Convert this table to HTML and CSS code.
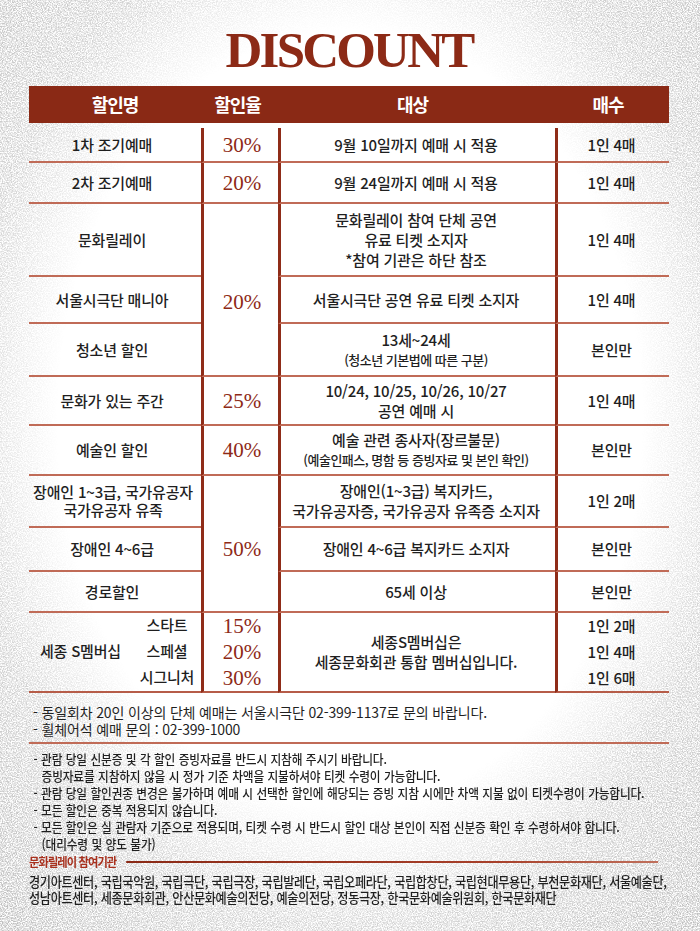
FILE: index.html
```html
<!DOCTYPE html>
<html lang="ko">
<head>
<meta charset="utf-8">
<title>DISCOUNT</title>
<link rel="stylesheet" href="styles.css">
</head>
<body>
<svg class="paper" width="700" height="931" viewBox="0 0 700 931" aria-hidden="true">
  <defs>
    <filter id="grain" x="0" y="0" width="100%" height="100%">
      <feTurbulence type="fractalNoise" baseFrequency="0.8" numOctaves="3" seed="7"/>
      <feColorMatrix type="matrix" values="0 0 0 0 0.52  0 0 0 0 0.52  0 0 0 0 0.52  2.8 0 0 0 -0.95"/>
    </filter>
    <radialGradient id="edge" cx="0.5" cy="0.45" r="0.72">
      <stop offset="0.58" stop-color="#fff" stop-opacity="0"/>
      <stop offset="0.76" stop-color="#fff" stop-opacity="0.7"/>
      <stop offset="1" stop-color="#fff" stop-opacity="1"/>
    </radialGradient>
    <mask id="edgeMask">
      <rect width="700" height="931" fill="url(#edge)"/>
    </mask>
  </defs>
  <rect width="700" height="931" fill="#ffffff"/>
  <rect width="700" height="931" filter="url(#grain)" mask="url(#edgeMask)"/>
</svg>

<main class="page">
  <h1 class="title">DISCOUNT</h1>

  <div class="thead">
    <div>할인명</div>
    <div>할인율</div>
    <div>대상</div>
    <div>매수</div>
  </div>

  <div class="tbody">
    <div class="c name">1차 조기예매</div>
    <div class="c pct">30%</div>
    <div class="c target">9월 10일까지 예매 시 적용</div>
    <div class="c qty">1인 4매</div>

    <div class="c name">2차 조기예매</div>
    <div class="c pct">20%</div>
    <div class="c target">9월 24일까지 예매 시 적용</div>
    <div class="c qty">1인 4매</div>

    <div class="c name">문화릴레이</div>
    <div class="c pct span3 shift-a">20%</div>
    <div class="c target">문화릴레이 참여 단체 공연<br>유료 티켓 소지자<br>*참여 기관은 하단 참조</div>
    <div class="c qty">1인 4매</div>

    <div class="c name">서울시극단 매니아</div>
    <div class="c target">서울시극단 공연 유료 티켓 소지자</div>
    <div class="c qty">1인 4매</div>

    <div class="c name">청소년 할인</div>
    <div class="c target"><span>13세~24세</span><span class="small">(청소년 기본법에 따른 구분)</span></div>
    <div class="c qty">본인만</div>

    <div class="c name">문화가 있는 주간</div>
    <div class="c pct">25%</div>
    <div class="c target">10/24, 10/25, 10/26, 10/27<br>공연 예매 시</div>
    <div class="c qty">1인 4매</div>

    <div class="c name">예술인 할인</div>
    <div class="c pct">40%</div>
    <div class="c target"><span>예술 관련 종사자(장르불문)</span><span class="small">(예술인패스, 명함 등 증빙자료 및 본인 확인)</span></div>
    <div class="c qty">본인만</div>

    <div class="c name tight"><span>장애인 1~3급, 국가유공자</span><span>국가유공자 유족</span></div>
    <div class="c pct span3 shift-b">50%</div>
    <div class="c target">장애인(1~3급) 복지카드,<br>국가유공자증, 국가유공자 유족증 소지자</div>
    <div class="c qty">1인 2매</div>

    <div class="c name">장애인 4~6급</div>
    <div class="c target">장애인 4~6급 복지카드 소지자</div>
    <div class="c qty">본인만</div>

    <div class="c name">경로할인</div>
    <div class="c target">65세 이상</div>
    <div class="c qty">본인만</div>

    <div class="c name member last">
      <span class="member-title">세종 S멤버십</span>
      <span class="tiers"><span>스타트</span><span>스페셜</span><span>시그니처</span></span>
    </div>
    <div class="c pct stack last"><span>15%</span><span>20%</span><span>30%</span></div>
    <div class="c target last">세종S멤버십은<br>세종문화회관 통합 멤버십입니다.</div>
    <div class="c qty stack last"><span>1인 2매</span><span>1인 4매</span><span>1인 6매</span></div>
  </div>

  <div class="contact">
    <p>- 동일회차 20인 이상의 단체 예매는 서울시극단 02-399-1137로 문의 바랍니다.</p>
    <p>- 휠체어석 예매 문의 : 02-399-1000</p>
  </div>

  <div class="fine">
    <div class="rules">
      <p>- 관람 당일 신분증 및 각 할인 증빙자료를 반드시 지참해 주시기 바랍니다.</p>
      <p class="cont">증빙자료를 지참하지 않을 시 정가 기준 차액을 지불하셔야 티켓 수령이 가능합니다.</p>
      <p>- 관람 당일 할인권종 변경은 불가하며 예매 시 선택한 할인에 해당되는 증빙 지참 시에만 차액 지불 없이 티켓수령이 가능합니다.</p>
      <p>- 모든 할인은 중복 적용되지 않습니다.</p>
      <p>- 모든 할인은 실 관람자 기준으로 적용되며, 티켓 수령 시 반드시 할인 대상 본인이 직접 신분증 확인 후 수령하셔야 합니다.</p>
      <p class="cont">(대리수령 및 양도 불가)</p>
    </div>
    <div class="relay-head">
      <span class="relay-label">문화릴레이 참여기관</span>
      <span class="relay-line"></span>
    </div>
    <div class="relay-list">
      <p>경기아트센터, 국립국악원, 국립극단, 국립극장, 국립발레단, 국립오페라단, 국립합창단, 국립현대무용단, 부천문화재단, 서울예술단,</p>
      <p>성남아트센터, 세종문화회관, 안산문화예술의전당, 예술의전당, 정동극장, 한국문화예술위원회, 한국문화재단</p>
    </div>
  </div>
</main>
</body>
</html>
```

FILE: styles.css
```css
* {
  box-sizing: border-box;
}

html, body {
  margin: 0;
  padding: 0;
}

body {
  position: relative;
  width: 700px;
  min-height: 931px;
  background: #ffffff;
  color: #1f1f1f;
  font-family: "Noto Sans CJK KR", "Noto Sans", sans-serif;
  overflow: hidden;
}

.paper {
  position: absolute;
  top: 0;
  left: 0;
  z-index: 0;
  display: block;
}

.page {
  position: relative;
  z-index: 1;
  padding: 0 31px 0 29px;
}

.title {
  margin: 24px 0 10px;
  height: 52px;
  font-family: "Liberation Serif", "Times New Roman", serif;
  font-weight: 700;
  font-size: 51px;
  line-height: 52px;
  letter-spacing: -2.8px;
  text-align: center;
  color: #8c2a16;
}

.thead {
  display: grid;
  grid-template-columns: 172px 77px 277px 114px;
  height: 37px;
  background: #8a2915;
  color: #ffffff;
  font-weight: 700;
  font-size: 18px;
  letter-spacing: -1px;
}

.thead div {
  display: flex;
  align-items: center;
  justify-content: center;
  padding-bottom: 1px;
}

.thead div:nth-child(2) {
  padding-right: 4px;
}

.thead div:nth-child(3) {
  padding-right: 8px;
}

.thead div:nth-child(4) {
  padding-right: 8px;
}

.tbody {
  display: grid;
  grid-template-columns: 172px 77px 277px 114px;
  grid-template-rows: 35px 41px 73px 47px 53px 49px 50px 52px 44px 41px 80px;
  margin-top: 5px;
}

.c {
  display: flex;
  flex-direction: column;
  align-items: center;
  justify-content: center;
  text-align: center;
  border-bottom: 2px solid #c06b57;
  font-size: 15px;
  font-weight: 500;
  line-height: 20px;
  letter-spacing: -0.2px;
}

.pct, .target, .qty {
  border-left: 3px solid #8f2c18;
}

.name {
  padding-right: 6px;
}

.name.tight {
  line-height: 18px;
  padding-right: 4px;
}

.pct {
  font-family: "Liberation Serif", "Times New Roman", serif;
  font-weight: 400;
  font-size: 21px;
  line-height: 24px;
  letter-spacing: 0;
  color: #8e2a17;
  padding-left: 2px;
}

.span3 {
  grid-row: span 3;
}

.shift-a {
  padding-top: 25px;
}

.shift-b {
  padding-top: 11px;
}

.target {
  padding-right: 4px;
}

.target .small {
  font-size: 13px;
  letter-spacing: -0.5px;
  line-height: 20px;
}

.qty {
  padding-right: 4px;
}

.stack {
  line-height: 26px;
}

.last {
  border-bottom-color: #b65c48;
}

.member {
  flex-direction: row;
  justify-content: flex-start;
  padding: 0 0 2px 11px;
}

.member-title {
  flex: none;
  text-align: left;
  white-space: nowrap;
}

.tiers {
  display: flex;
  flex-direction: column;
  align-items: center;
  width: 64px;
  margin-left: auto;
  margin-right: 2px;
  line-height: 26px;
  white-space: nowrap;
}

.contact {
  padding: 11px 0 4px 4px;
  border-bottom: 2px solid #c06b57;
}

.contact p {
  margin: 0;
  font-size: 14px;
  line-height: 17px;
  letter-spacing: -0.15px;
}

.fine {
  width: calc(640px / 0.9);
  transform: scaleX(0.9);
  transform-origin: 0 0;
}

.rules {
  padding: 6px 0 0 5px;
}

.rules p, .relay-list p {
  margin: 0;
  font-size: 13px;
  font-weight: 500;
  line-height: 17px;
  word-spacing: 0.5px;
  letter-spacing: -0.2px;
  white-space: nowrap;
}

.rules p.cont {
  padding-left: 9px;
}

.relay-head {
  display: flex;
  align-items: center;
  margin-top: 1px;
  height: 17px;
  padding-right: 12px;
}

.relay-label {
  color: #a8301d;
  font-weight: 700;
  font-size: 12.5px;
  letter-spacing: -1px;
  line-height: 17px;
}

.relay-line {
  flex: 1;
  height: 2px;
  margin-left: 11px;
  background: linear-gradient(to right, #8a2915, #a8402a 70%, #c0705c);
}

.relay-list {
  margin-top: 3px;
}

.relay-list p {
  font-size: 13.5px;
  line-height: 16px;
  letter-spacing: -0.4px;
}
```
